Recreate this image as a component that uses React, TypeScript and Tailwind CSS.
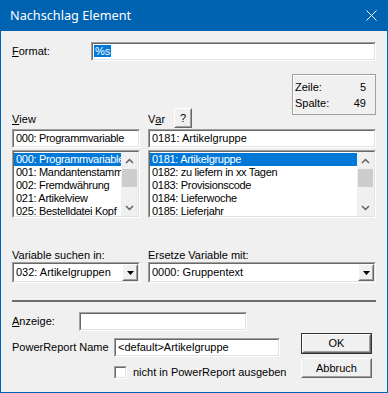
import type { ReactNode } from "react";

const font = "font-['Liberation_Sans',Arial,sans-serif] text-[11px] leading-[13px] text-black";

function Sunken({ className, children }: { className: string; children?: ReactNode }) {
  return (
    <div className={`border border-t-[#a0a0a0] border-l-[#a0a0a0] border-b-white border-r-white ${className}`}>
      <div className="h-full w-full border border-t-[#696969] border-l-[#696969] border-b-[#e3e3e3] border-r-[#e3e3e3] bg-white overflow-hidden">
        {children}
      </div>
    </div>
  );
}

function Raised({ className, children }: { className: string; children?: ReactNode }) {
  return (
    <div className={`border border-t-white border-l-white border-b-[#696969] border-r-[#696969] bg-[#f0f0f0] ${className}`}>
      <div className="h-full w-full border border-t-[#f0f0f0] border-l-[#f0f0f0] border-b-[#a0a0a0] border-r-[#a0a0a0] flex items-center justify-center">
        {children}
      </div>
    </div>
  );
}

function Scrollbar() {
  return (
    <div className="w-[17px] h-full bg-[#f0f0f0] flex flex-col">
      <div className="h-[17px] flex items-center justify-center">
        <svg width="9" height="6" viewBox="0 0 9 6">
          <path d="M1 5 L4.5 1.5 L8 5" stroke="#606060" strokeWidth="1.5" fill="none" />
        </svg>
      </div>
      <div className="h-[18px] mx-px bg-[#cdcdcd]" />
      <div className="flex-1" />
      <div className="h-[17px] flex items-center justify-center">
        <svg width="9" height="6" viewBox="0 0 9 6">
          <path d="M1 1 L4.5 4.5 L8 1" stroke="#606060" strokeWidth="1.5" fill="none" />
        </svg>
      </div>
    </div>
  );
}

function ListBox({ items, className }: { items: string[]; className: string }) {
  return (
    <Sunken className={className}>
      <div className="flex h-full">
        <div className="flex-1 min-w-0 pt-px overflow-hidden tracking-[-0.3px]">
          {items.map((item, i) => (
            <div
              key={item}
              className={`h-[13px] pl-[2px] whitespace-nowrap ${i === 0 ? "bg-[#0078d7] text-white" : ""}`}
            >
              {item}
            </div>
          ))}
        </div>
        <Scrollbar />
      </div>
    </Sunken>
  );
}

function Combo({ value, className }: { value: string; className: string }) {
  return (
    <Sunken className={className}>
      <div className="flex h-full items-center">
        <div className="flex-1 pl-[2px] whitespace-nowrap">{value}</div>
        <Raised className="w-[16px] h-full">
          <svg width="7" height="4" viewBox="0 0 7 4">
            <path d="M0 0 H7 L3.5 4 Z" fill="#000" />
          </svg>
        </Raised>
      </div>
    </Sunken>
  );
}

export default function App() {
  return (
    <div className={`w-[388px] h-[393px] flex flex-col border border-t-0 border-[#0063b1] bg-[#f0f0f0] ${font}`}>
      <div className="h-[31px] bg-[#0063b1] flex items-center pl-[9px] pr-[10px] shrink-0">
        <span className="font-['Noto_Sans',sans-serif] text-[12.7px] text-white leading-none">Nachschlag Element</span>
        <svg className="ml-auto" width="11" height="11" viewBox="0 0 11 11">
          <path d="M0.5 0.5 L10.5 10.5 M10.5 0.5 L0.5 10.5" stroke="#fff" strokeWidth="1" />
        </svg>
      </div>

      <div className="flex-1 px-[11px] pt-[11px]">
        {/* Format */}
        <div className="flex items-center h-[19px]">
          <div className="w-[79px]">
            <span className="underline">F</span>ormat:
          </div>
          <Sunken className="flex-1 h-[19px]">
            <div className="pl-px pt-[1px]">
              <span className="bg-[#0078d7] text-white px-px">%s</span>
            </div>
          </Sunken>
        </div>

        {/* headers + Zeile box */}
        <div className="flex mt-[13px] h-[55px]">
          <div className="w-[128px] flex items-end">
            <div className="h-[19px] flex items-center">
              <span className="underline">V</span>iew
            </div>
          </div>
          <div className="w-[228px] ml-[8px] flex items-end">
            <div className="w-[26px] h-[19px] flex items-center">
              V<span className="underline">a</span>r
            </div>
            <Raised className="w-[18px] h-[20px] mb-px">?</Raised>
            <div className="ml-auto self-start w-[84px] h-[41px] border border-[#a0a0a0] shadow-[inset_1px_1px_0_white] pl-[2px] pr-[9px] pt-[4px] leading-[16px]">
              <div className="flex justify-between">
                <span>Zeile:</span>
                <span>5</span>
              </div>
              <div className="flex justify-between">
                <span>Spalte:</span>
                <span>49</span>
              </div>
            </div>
          </div>
        </div>

        {/* inputs */}
        <div className="flex gap-[8px]">
          <Sunken className="w-[128px] h-[19px]">
            <div className="pl-[2px] pt-[1px] whitespace-nowrap tracking-[-0.3px]">000: Programmvariable</div>
          </Sunken>
          <Sunken className="w-[228px] h-[19px]">
            <div className="pl-[2px] pt-[1px] whitespace-nowrap">0181: Artikelgruppe</div>
          </Sunken>
        </div>

        {/* lists */}
        <div className="flex gap-[8px] mt-[2px]">
          <ListBox
            className="w-[128px] h-[68px]"
            items={[
              "000: Programmvariable",
              "001: Mandantenstamm",
              "002: Fremdwährung",
              "021: Artikelview",
              "025: Bestelldatei Kopf",
            ]}
          />
          <ListBox
            className="w-[228px] h-[68px]"
            items={[
              "0181: Artikelgruppe",
              "0182: zu liefern in xx Tagen",
              "0183: Provisionscode",
              "0184: Lieferwoche",
              "0185: Lieferjahr",
            ]}
          />
        </div>

        {/* search / replace */}
        <div className="flex gap-[8px] mt-[31px]">
          <div className="w-[128px]">
            <div className="h-[13px]">Variable suchen in:</div>
            <Combo className="w-[128px] h-[21px]" value="032: Artikelgruppen" />
          </div>
          <div className="w-[228px]">
            <div className="h-[13px]">Ersetze Variable mit:</div>
            <Combo className="w-[228px] h-[21px]" value="0000: Gruppentext" />
          </div>
        </div>

        <div className="h-[2px] bg-[#6d6d6d] mt-[17px]" />

        {/* bottom */}
        <div className="flex">
          <div className="flex-1">
            <div className="flex items-center h-[19px] mt-[10px]">
              <div className="w-[67px]">
                <span className="underline">A</span>nzeige:
              </div>
              <Sunken className="w-[168px] h-[19px]" />
            </div>
            <div className="flex items-center h-[19px] mt-[7px]">
              <div className="w-[102px]">PowerReport Name</div>
              <Sunken className="w-[166px] h-[19px]">
                <div className="pl-[2px] pt-[1px] whitespace-nowrap">&lt;default&gt;Artikelgruppe</div>
              </Sunken>
            </div>
            <div className="flex items-center mt-[9px] pl-[102px]">
              <Sunken className="w-[13px] h-[13px]" />
              <span className="ml-[6px]">nicht in PowerReport ausgeben</span>
            </div>
          </div>
          <div className="w-[71px] mr-[4px] mt-[31px] flex flex-col gap-[4px]">
            <div className="border border-[#333]">
              <Raised className="h-[19px]">OK</Raised>
            </div>
            <Raised className="h-[20px]">Abbruch</Raised>
          </div>
        </div>
      </div>
    </div>
  );
}
